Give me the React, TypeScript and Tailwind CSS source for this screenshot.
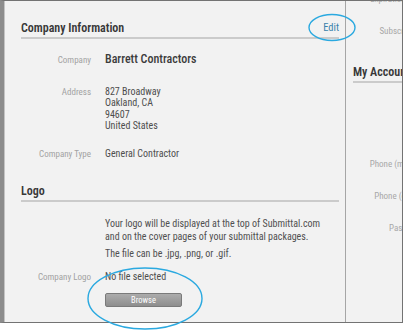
import React from 'react';

interface FieldRowProps {
  label: string;
  className?: string;
  children: React.ReactNode;
}

const FieldRow: React.FC<FieldRowProps> = ({ label, className = '', children }) => (
  <div className={`flex items-baseline ${className}`}>
    <div className="w-[70px] shrink-0 text-right text-[9px] leading-[11.5px] text-[#a2a2a2]">{label}</div>
    <div className="ml-[14px] text-[10px] leading-[11.5px] text-[#4e4e4e]">{children}</div>
  </div>
);

const SectionHeading: React.FC<{ title: string; className?: string; children?: React.ReactNode }> = ({
  title,
  className = '',
  children,
}) => (
  <div className={`flex h-[18px] items-start justify-between border-b-2 border-[#cbcbcb] ${className}`}>
    <h2 className="text-[12px] leading-[14px] font-semibold text-[#383838]">{title}</h2>
    {children}
  </div>
);

const SideLabel: React.FC<{ label: string }> = ({ label }) => (
  <div className="flex h-[32px] items-center">
    <div className="w-[71px] shrink-0 text-right text-[9px] text-[#a8a8a8]">{label}</div>
  </div>
);

export default function App() {
  return (
    <div className="relative h-[330px] w-[404px] overflow-hidden bg-white font-['Roboto',sans-serif] font-stretch-condensed">
      <div className="flex h-[323px] w-[403px] border-t border-r border-b border-l-4 border-[#737373] border-l-[#8d8d8d] bg-[#f2f2f2]">
        {/* main column */}
        <div className="w-[341px] shrink-0 border-l border-[#c4c4c4] pt-[20px] pr-[6px] pl-4">
          <SectionHeading title="Company Information">
            <button className="text-[10.5px] leading-[14px] text-[#3b82ab]">Edit</button>
          </SectionHeading>

          <div className="mt-[12px] flex items-baseline">
            <div className="w-[70px] shrink-0 text-right text-[9px] text-[#a2a2a2]">Company</div>
            <div className="ml-[14px] text-[12px] leading-[16px] font-medium text-[#3c3c3c]">Barrett Contractors</div>
          </div>

          <FieldRow label="Address" className="mt-[18px]">
            827 Broadway
            <br />
            Oakland, CA
            <br />
            94607
            <br />
            United States
          </FieldRow>

          <FieldRow label="Company Type" className="mt-[16px]">
            General Contractor
          </FieldRow>

          <SectionHeading title="Logo" className="mt-[24px]" />

          <div className="mt-[16px] ml-[84px] text-[10px] leading-[12.5px] text-[#505050]">
            <p>
              Your logo will be displayed at the top of Submittal.com
              <br />
              and on the cover pages of your submittal packages.
            </p>
            <p className="mt-[5px]">The file can be .jpg, .png, or .gif.</p>
          </div>

          <FieldRow label="Company Logo" className="mt-[10px]">
            No file selected
          </FieldRow>

          <button className="mt-[10px] ml-[84px] flex h-[14px] w-[77px] items-center justify-center rounded-[2px] border border-[#7a7a7a] bg-gradient-to-b from-[#acacac] to-[#8e8e8e] text-[8.5px] text-white">
            Browse
          </button>
        </div>

        {/* side column, clipped */}
        <div className="min-w-0 flex-1 overflow-hidden border-l border-[#a6a6a6]">
          <div className="-mt-[17px] w-[200px] pl-[7px]">
            <SideLabel label="Expiration Date" />
            <SideLabel label="Subscription" />
            <SectionHeading title="My Account" className="mt-[17px]" />
            <div className="mt-[2px]">
              <SideLabel label="Name" />
              <SideLabel label="Email" />
              <SideLabel label="Phone (mobile)" />
              <SideLabel label="Phone (office)" />
              <SideLabel label="Password" />
            </div>
          </div>
        </div>
      </div>

      {/* annotation circles */}
      <svg className="pointer-events-none absolute top-0 left-0" width="404" height="330" viewBox="0 0 404 330" fill="none">
        <ellipse cx="332" cy="27.5" rx="23" ry="13" stroke="#2aa9e0" strokeWidth="1.4" />
        <ellipse cx="145" cy="298.5" rx="57" ry="30.5" stroke="#2aa9e0" strokeWidth="1.4" />
      </svg>
    </div>
  );
}
